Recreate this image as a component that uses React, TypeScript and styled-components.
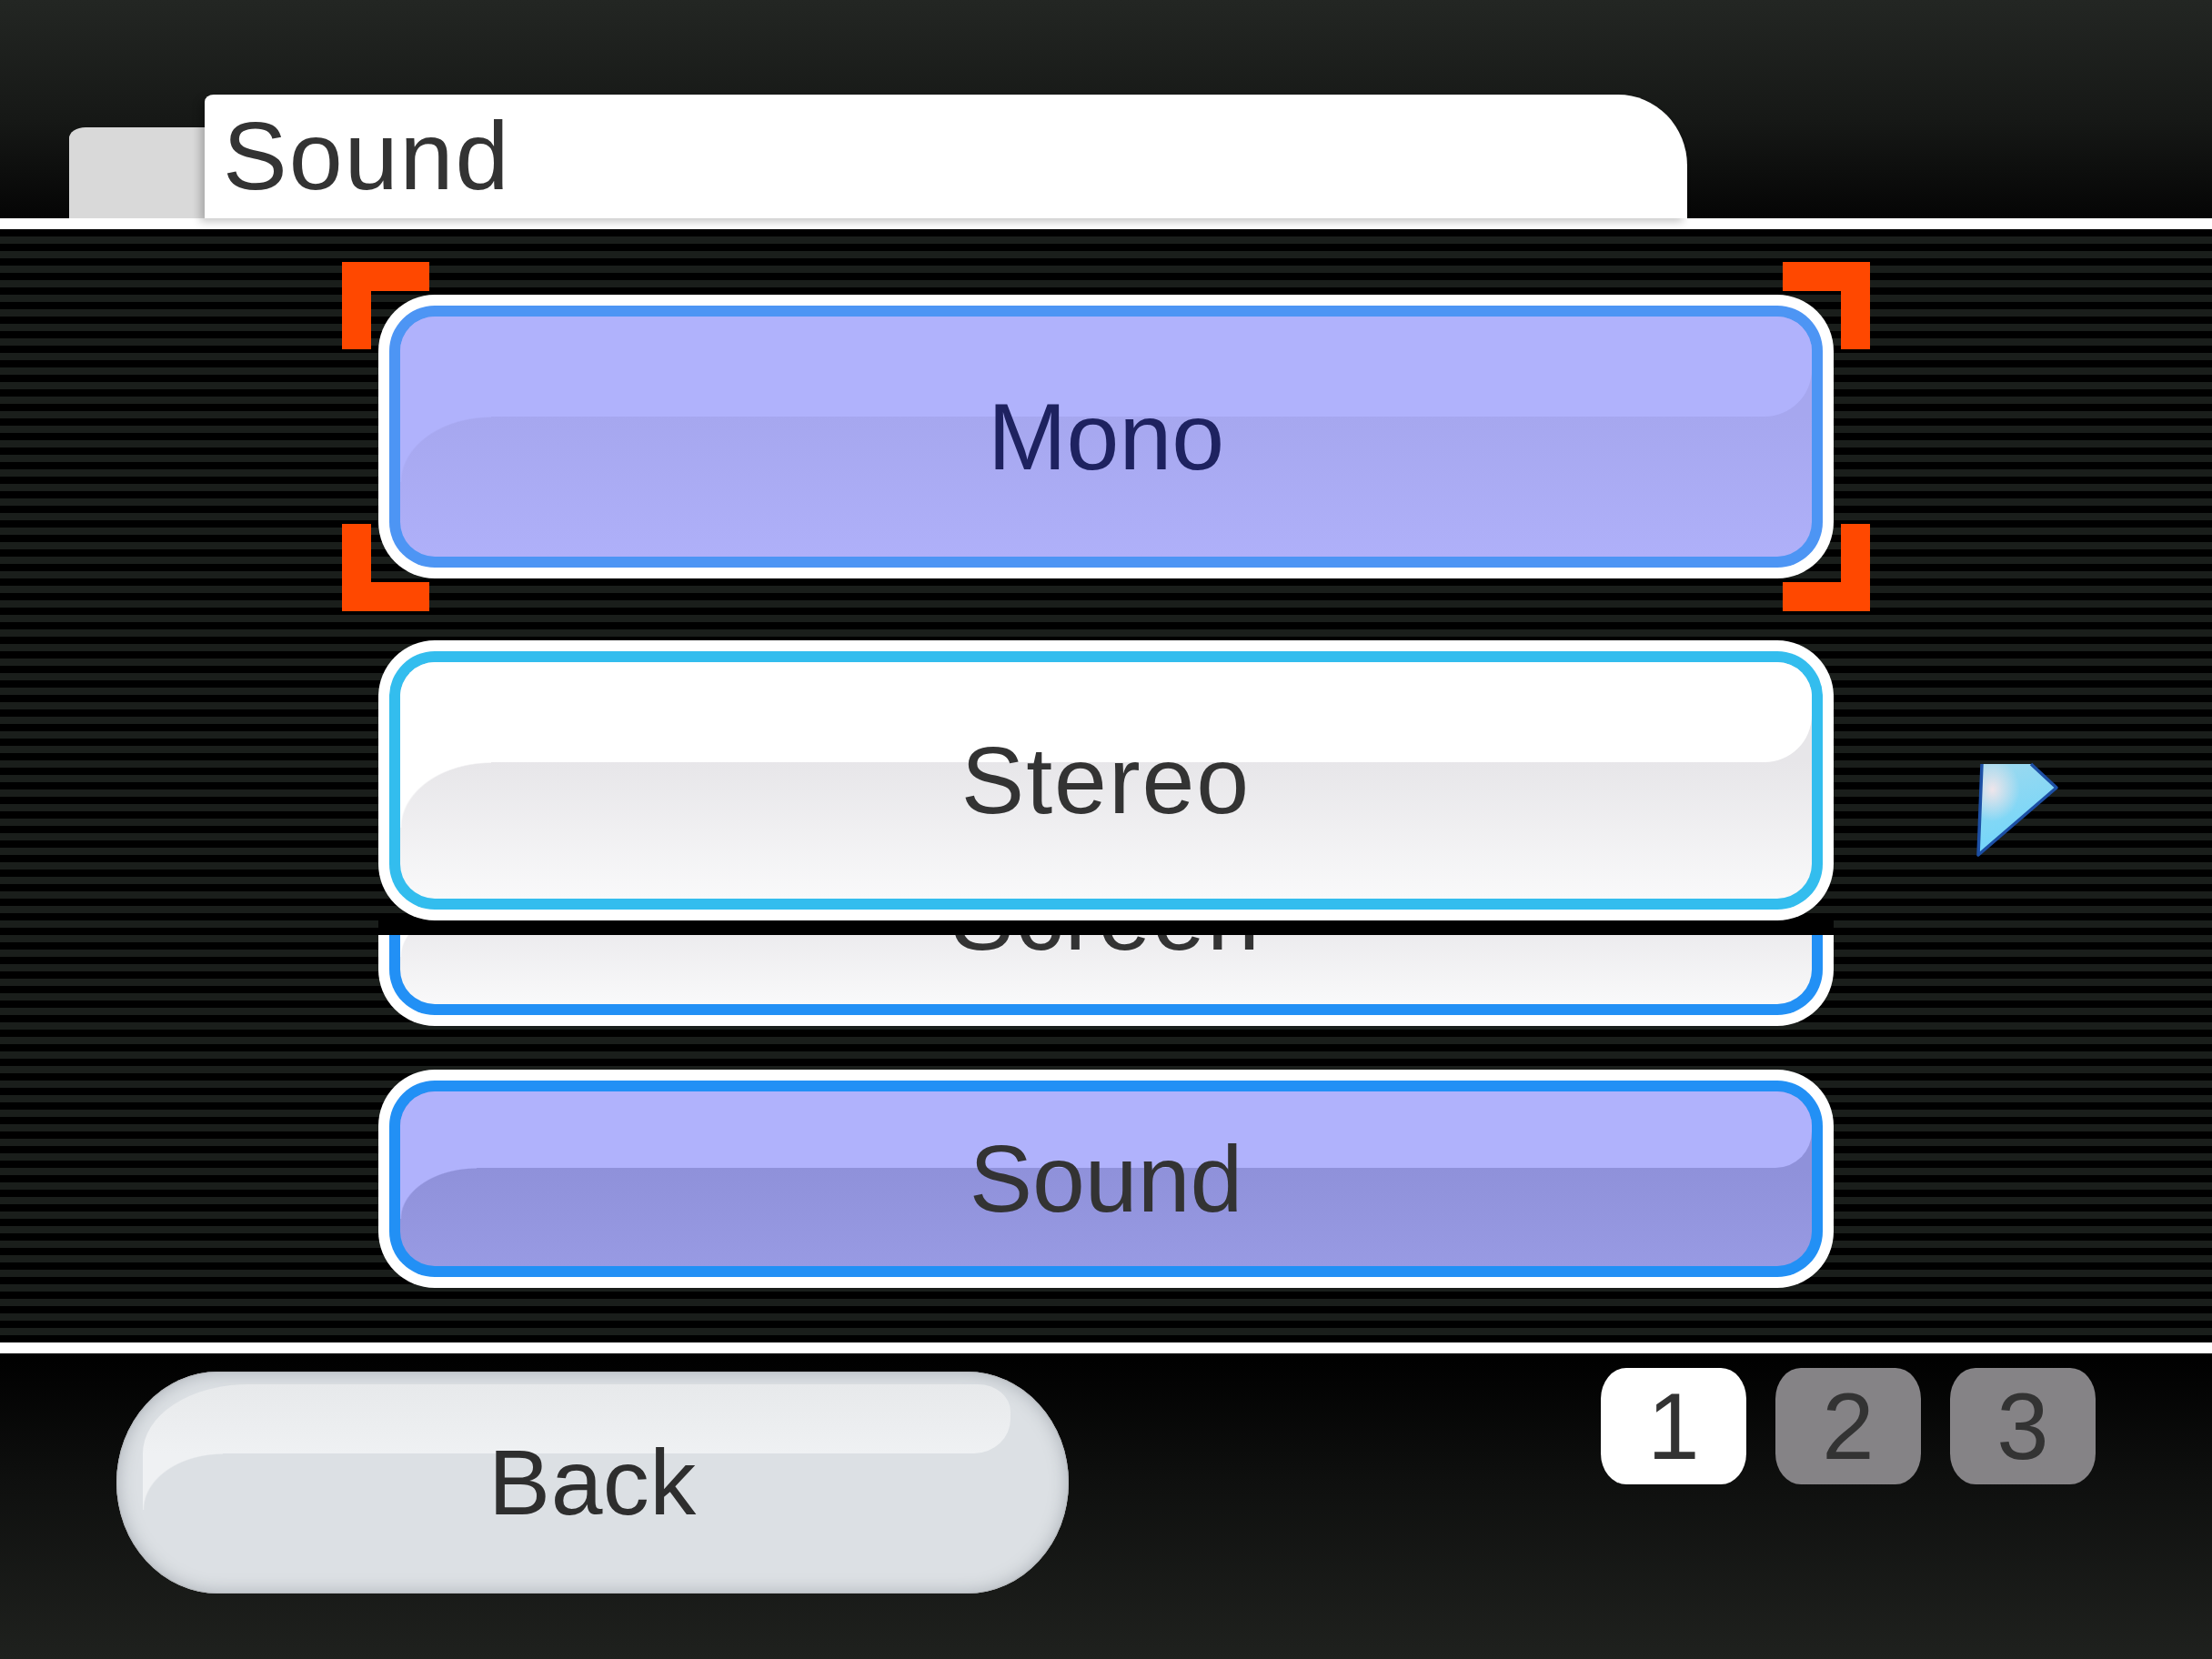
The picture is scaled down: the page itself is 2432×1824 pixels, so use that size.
import React from "react";
import styled, { createGlobalStyle } from "styled-components";

const Global = createGlobalStyle`
  html, body { margin: 0; padding: 0; background: #000; }
  body { font-family: "Liberation Sans", Arial, sans-serif; }
  * { box-sizing: border-box; }
`;

const Screen = styled.div`
  width: 2432px;
  height: 1824px;
  display: flex;
  flex-direction: column;
  overflow: hidden;
  font-family: "Liberation Sans", Arial, sans-serif;
`;

const Header = styled.header`
  position: relative;
  z-index: 2;
  height: 240px;
  flex-shrink: 0;
  display: flex;
  align-items: flex-end;
  padding-left: 76px;
  background: linear-gradient(to bottom, #232623 0%, #161816 55%, #050505 100%);
`;

const BackTab = styled.div`
  width: 149px;
  height: 100px;
  background: #d9d9d9;
  border-top-left-radius: 18px 12px;
`;

const TitleTab = styled.div`
  width: 1630px;
  height: 136px;
  background: #fff;
  border-radius: 10px 76px 0 0 / 8px 78px 0 0;
  padding: 14px 0 0 20px;
  box-shadow: -5px 4px 10px rgba(0, 0, 0, 0.22);
`;

const Title = styled.h1`
  margin: 0;
  font-size: 106px;
  line-height: 1;
  font-weight: 400;
  color: #333;
  letter-spacing: 2px;
`;

const Rule = styled.div`
  height: 12px;
  flex-shrink: 0;
  background: #fff;
`;

const Panel = styled.main`
  height: 1224px;
  flex-shrink: 0;
  display: flex;
  flex-direction: column;
  align-items: center;
  padding-top: 36px;
  background: repeating-linear-gradient(
    to bottom,
    #000 0px,
    #000 8px,
    #1a1e1b 8px,
    #1a1e1b 16px
  );
`;

const SelectFrame = styled.div`
  position: relative;
  width: 1680px;
  height: 384px;
  padding: 36px 40px;
`;

type Pos = "tl" | "tr" | "bl" | "br";

const Corner = styled.span<{ $pos: Pos }>`
  position: absolute;
  width: 96px;
  height: 96px;
  border: 0 solid #ff4800;
  ${(p) => (p.$pos[0] === "t" ? "top: 0; border-top-width: 32px;" : "bottom: 0; border-bottom-width: 32px;")}
  ${(p) => (p.$pos[1] === "l" ? "left: 0; border-left-width: 32px;" : "right: 0; border-right-width: 32px;")}
`;

const OptionRow = styled.div`
  width: 100%;
  margin-top: 32px;
  display: grid;
  grid-template-columns: 416px 1600px 1fr;
`;

const Arrow = styled.svg`
  grid-column: 3;
  margin: 134px 0 0 156px;
  display: block;
`;

const Peek = styled.div`
  width: 1600px;
  height: 116px;
  flex-shrink: 0;
  border-top: 16px solid #000;
  overflow: hidden;
  display: flex;
  flex-direction: column;
  justify-content: flex-end;
`;

const Spaced = styled.div<{ $top: number }>`
  margin-top: ${(p) => p.$top}px;
`;

const Outer = styled.div<{ $h: number }>`
  grid-column: 2;
  width: 1600px;
  height: ${(p) => p.$h}px;
  flex-shrink: 0;
  padding: 12px;
  border-radius: 62px;
  background: #fff;
`;

const Ring = styled.div<{ $ring: string }>`
  height: 100%;
  padding: 12px;
  border-radius: 50px;
  background: ${(p) => p.$ring};
`;

type FaceProps = {
  $light: string;
  $dark1: string;
  $dark2: string;
  $band: number;
  $rx: number;
  $ry: number;
  $r: number;
};

const Face = styled.div<FaceProps>`
  position: relative;
  height: 100%;
  border-radius: 38px;
  overflow: hidden;
  display: flex;
  align-items: center;
  justify-content: center;
  background: linear-gradient(
    to bottom,
    ${(p) => p.$dark1} 0px,
    ${(p) => p.$dark1} ${(p) => p.$band}px,
    ${(p) => p.$dark2} 100%
  );
  &::before {
    content: "";
    position: absolute;
    top: 0;
    left: 0;
    right: 0;
    height: ${(p) => p.$band}px;
    background: ${(p) => p.$light};
    border-bottom-right-radius: ${(p) => p.$r}px;
  }
  &::after {
    content: "";
    position: absolute;
    top: ${(p) => p.$band}px;
    left: 0;
    width: ${(p) => p.$rx}px;
    height: ${(p) => p.$ry}px;
    background: radial-gradient(
      ellipse ${(p) => p.$rx}px ${(p) => p.$ry}px at 100% 100%,
      transparent 98%,
      ${(p) => p.$light} 100%
    );
  }
`;

const Label = styled.span<{ $color: string; $spacing: number }>`
  position: relative;
  z-index: 1;
  font-size: 104px;
  line-height: 1;
  letter-spacing: ${(p) => p.$spacing}px;
  color: ${(p) => p.$color};
`;

type Tone = "lavender" | "white" | "deep";

const tones: Record<Tone, { light: string; dark1: string; dark2: string }> = {
  lavender: { light: "#b0b2fc", dark1: "#a6a7ef", dark2: "#afb0f9" },
  white: { light: "#ffffff", dark1: "#e7e6e9", dark2: "#f9f9fa" },
  deep: { light: "#b0b2fc", dark1: "#8f91da", dark2: "#989ae3" },
};

function Option({
  label,
  h,
  ring,
  tone,
  color = "#333",
  spacing = 0,
}: {
  label: string;
  h: number;
  ring: string;
  tone: Tone;
  color?: string;
  spacing?: number;
}) {
  const t = tones[tone];
  const tall = h > 260;
  return (
    <Outer $h={h}>
      <Ring $ring={ring}>
        <Face
          $light={t.light}
          $dark1={t.dark1}
          $dark2={t.dark2}
          $band={tall ? 110 : 84}
          $rx={tall ? 100 : 84}
          $ry={tall ? 72 : 56}
          $r={tall ? 52 : 40}
        >
          <Label $color={color} $spacing={spacing}>
            {label}
          </Label>
        </Face>
      </Ring>
    </Outer>
  );
}

const Footer = styled.footer`
  height: 336px;
  flex-shrink: 0;
  display: flex;
  justify-content: space-between;
  align-items: flex-start;
  padding: 0 128px;
  background: linear-gradient(to bottom, #000 0%, #0e0f0e 40%, #1f211e 100%);
`;

const BackButton = styled.button`
  position: relative;
  margin-top: 20px;
  width: 1047px;
  height: 244px;
  border: none;
  padding: 0;
  overflow: hidden;
  border-radius: 112px / 122px;
  background: #dce0e4;
  box-shadow: inset 0 0 0 1px #b8bbbf, inset 0 0 18px 2px rgba(110, 118, 128, 0.4);
  display: flex;
  align-items: center;
  justify-content: center;
  font-family: "Liberation Sans", Arial, sans-serif;
  &::before {
    content: "";
    position: absolute;
    top: 14px;
    left: 29px;
    right: 64px;
    height: 76px;
    background: linear-gradient(to bottom, #e7e9eb, #eff1f3);
    border-radius: 116px 36px 40px 0 / 76px 30px 38px 0;
  }
  &::after {
    content: "";
    position: absolute;
    top: 90px;
    left: 29px;
    width: 88px;
    height: 62px;
    background: radial-gradient(
      ellipse 88px 62px at 100% 100%,
      transparent 98%,
      #eff1f3 100%
    );
  }
`;

const BackLabel = styled.span`
  position: relative;
  z-index: 1;
  font-size: 102px;
  line-height: 1;
  letter-spacing: 0.5px;
  color: #2e2e2e;
`;

const Pages = styled.nav`
  margin-top: 16px;
  display: flex;
  gap: 32px;
`;

const PageBox = styled.div<{ $active?: boolean }>`
  width: 160px;
  height: 128px;
  border-radius: 28px / 34px;
  background: ${(p) => (p.$active ? "#ffffff" : "#858386")};
  display: flex;
  align-items: center;
  justify-content: center;
  font-size: 103px;
  line-height: 1;
  color: #333;
`;

export default function App() {
  return (
    <Screen>
      <Global />
      <Header>
        <BackTab />
        <TitleTab>
          <Title>Sound</Title>
        </TitleTab>
      </Header>
      <Rule />
      <Panel>
        <SelectFrame>
          <Corner $pos="tl" />
          <Corner $pos="tr" />
          <Corner $pos="bl" />
          <Corner $pos="br" />
          <Option label="Mono" h={312} ring="#4d95f4" tone="lavender" color="#1e2260" />
        </SelectFrame>
        <OptionRow>
          <Option label="Stereo" h={308} ring="#33bdee" tone="white" spacing={2} />
          <Arrow width="92" height="106" viewBox="0 0 92 106">
            <defs>
              <linearGradient id="arrowFill" x1="0" y1="0" x2="0.3" y2="1">
                <stop offset="0" stopColor="#9fd9ee" />
                <stop offset="1" stopColor="#6fd6fb" />
              </linearGradient>
              <radialGradient id="arrowGlow" cx="0.18" cy="0.28" r="0.35">
                <stop offset="0" stopColor="#f4e6ea" stopOpacity="0.95" />
                <stop offset="1" stopColor="#f4e6ea" stopOpacity="0" />
              </radialGradient>
            </defs>
            <polygon points="7,2 61,2 89,28 3,102" fill="url(#arrowFill)" />
            <polygon points="7,2 61,2 89,28 3,102" fill="url(#arrowGlow)" />
            <polyline
              points="61,2 89,28 3,102 7,2"
              fill="none"
              stroke="#1c4fa5"
              strokeWidth="3.5"
              strokeLinejoin="round"
            />
          </Arrow>
        </OptionRow>
        <Peek>
          <Option label="Screen" h={240} ring="#2290f5" tone="white" spacing={2} />
        </Peek>
        <Spaced $top={48}>
          <Option label="Sound" h={240} ring="#2290f5" tone="deep" />
        </Spaced>
      </Panel>
      <Rule />
      <Footer>
        <BackButton>
          <BackLabel>Back</BackLabel>
        </BackButton>
        <Pages>
          <PageBox $active>1</PageBox>
          <PageBox>2</PageBox>
          <PageBox>3</PageBox>
        </Pages>
      </Footer>
    </Screen>
  );
}
